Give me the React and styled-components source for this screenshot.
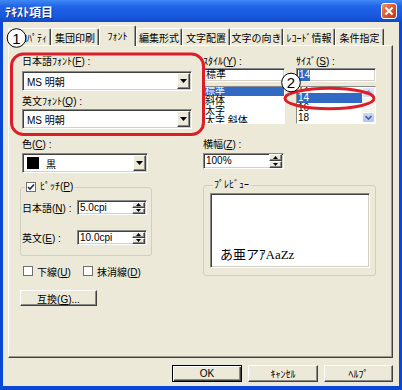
import React from "react";
import styled, { css, createGlobalStyle } from "styled-components";

const GlobalStyle = createGlobalStyle`
  html, body {
    margin: 0;
    padding: 0;
  }
  body {
    font-family: "Liberation Sans", "Noto Sans CJK JP", sans-serif;
    font-size: 10px;
    color: #000;
  }
`;

const sunken = css`
  box-sizing: border-box;
  border: 1px solid;
  border-color: #8a8a8a #fff #fff #8a8a8a;
  box-shadow: inset 1px 1px 0 #404040, inset -1px -1px 0 #d4d0c8;
  background: #fff;
`;

const raised = css`
  box-sizing: border-box;
  border: 1px solid;
  border-color: #fff #404040 #404040 #fff;
  box-shadow: inset -1px -1px 0 #8a8a8a;
  background: #ece9d8;
`;

const Window = styled.div`
  position: relative;
  width: 402px;
  height: 390px;
  display: flex;
  flex-direction: column;
  overflow: hidden;
`;

const TitleBar = styled.div`
  flex: none;
  height: 22px;
  display: flex;
  align-items: center;
  justify-content: space-between;
  padding: 0 5px;
  background: linear-gradient(#3f89f5 0%, #2163e6 30%, #1757de 75%, #0f48cc 100%);
`;

const Title = styled.span`
  color: #fff;
  font-family: "Noto Sans CJK JP", sans-serif;
  font-size: 12px;
  font-weight: bold;
  text-shadow: 1px 1px 0 #0c2e8a;
`;

const CloseButton = styled.div`
  box-sizing: border-box;
  width: 16px;
  height: 16px;
  border: 1px solid #fff;
  border-radius: 3px;
  background: linear-gradient(135deg, #f0906c, #d9532c 55%, #bb3a1a);
  display: flex;
  align-items: center;
  justify-content: center;
`;

const Body = styled.div`
  flex: 1;
  display: flex;
  flex-direction: column;
  background: #ece9d8;
  border: solid #0b47d5;
  border-width: 0 3px 4px 3px;
  padding: 3px 6px 0 5px;
`;

const TabStrip = styled.div`
  position: relative;
  z-index: 1;
  display: flex;
  align-items: flex-end;
  height: 21px;
  margin-bottom: -1px;
`;

const Tab = styled.div`
  box-sizing: border-box;
  width: ${(p) => p.$w}px;
  height: ${(p) => (p.$active ? 21 : 17)}px;
  margin-bottom: ${(p) => (p.$active ? 0 : 1)}px;
  padding-bottom: ${(p) => (p.$active ? 1 : 0)}px;
  display: flex;
  align-items: center;
  justify-content: center;
  background: #ece9d8;
  border-top: 1px solid #fff;
  border-left: 1px solid #fff;
  border-right: 1px solid #404040;
  box-shadow: inset -1px 0 0 #9d9a8c;
  border-radius: 2px 2px 0 0;
  white-space: nowrap;
`;

const Panel = styled.div`
  box-sizing: border-box;
  height: 313px;
  display: flex;
  gap: 11px;
  padding: 10px 0 0 13px;
  border: 1px solid;
  border-color: #fff #404040 #404040 #fff;
  box-shadow: inset -1px -1px 0 #9d9a8c;
`;

const Column = styled.div`
  flex: none;
  width: ${(p) => p.$w}px;
  display: flex;
  flex-direction: column;
  align-items: flex-start;
`;

const FieldLabel = styled.div`
  height: 12px;
  line-height: 12px;
  margin-top: ${(p) => p.$mt || 0}px;
  white-space: nowrap;
`;

const Combo = styled.div`
  ${sunken}
  width: ${(p) => p.$w}px;
  height: 20px;
  margin-top: ${(p) => p.$mt || 0}px;
  display: flex;
  align-items: center;
  gap: 7px;
  padding: 0 1px 0 4px;
  white-space: nowrap;
`;

const DropButton = styled.div`
  ${raised}
  margin-left: auto;
  width: 13px;
  height: 16px;
  display: flex;
  align-items: center;
  justify-content: center;
`;

const Swatch = styled.span`
  width: 12px;
  height: 12px;
  background: #000;
`;

const Group = styled.fieldset`
  box-sizing: border-box;
  width: ${(p) => p.$w}px;
  margin: ${(p) => p.$mt}px 0 0 ${(p) => p.$ml || 0}px;
  padding: ${(p) => p.$pad};
  min-width: 0;
  border: 1px solid #d0d0bf;
  border-radius: 3px;
`;

const Legend = styled.legend`
  height: 12px;
  line-height: 12px;
  padding: 0 2px 0 1px;
  margin-left: 3px;
`;

const LegendInner = styled.span`
  display: inline-flex;
  align-items: center;
  gap: 4px;
  height: 12px;
`;

const PitchRow = styled.div`
  display: flex;
  align-items: center;
  margin-top: ${(p) => p.$mt || 0}px;
`;

const RowLabel = styled.span`
  width: 55px;
  white-space: nowrap;
`;

const Spin = styled.div`
  ${sunken}
  width: ${(p) => p.$w}px;
  height: ${(p) => p.$h}px;
  margin-top: ${(p) => p.$mt || 0}px;
  display: flex;
  align-items: center;
  padding: 0 1px 0 2px;
  line-height: 12px;
`;

const SpinButtons = styled.div`
  margin-left: auto;
  display: flex;
  flex-direction: column;
`;

const SpinButton = styled.div`
  ${raised}
  width: 13px;
  height: ${(p) => p.$h}px;
  display: flex;
  align-items: center;
  justify-content: center;
`;

const CheckRow = styled.div`
  display: flex;
  align-items: center;
  margin-top: 9px;
  padding-left: 1px;
`;

const CheckItem = styled.label`
  display: flex;
  align-items: center;
  gap: 4px;
  width: ${(p) => p.$w}px;
  height: 12px;
  white-space: nowrap;
`;

const CheckBox = styled.span`
  box-sizing: border-box;
  width: 10px;
  height: 10px;
  border: 1px solid #6f6f6f;
  background: #fff;
  display: flex;
  align-items: center;
  justify-content: center;
`;

const PushButton = styled.div`
  ${raised}
  width: ${(p) => p.$w}px;
  height: ${(p) => p.$h}px;
  margin-top: ${(p) => p.$mt || 0}px;
  margin-left: ${(p) => p.$ml || 0}px;
  display: flex;
  align-items: center;
  justify-content: center;
  white-space: nowrap;
  ${(p) =>
    p.$default &&
    css`
      border-color: #000;
      box-shadow: inset 1px 1px 0 #fff, inset -1px -1px 0 #404040,
        inset -2px -2px 0 #8a8a8a;
    `}
`;

const StyleRow = styled.div`
  display: flex;
  gap: 11px;
`;

const TextBox = styled.div`
  ${sunken}
  width: 100%;
  height: 14px;
  display: flex;
  align-items: center;
  padding-left: 2px;
  line-height: 12px;
`;

const Selected = styled.span`
  background: #316ac5;
  color: #fff;
`;

const ListBox = styled.div`
  box-sizing: border-box;
  width: 100%;
  height: 38px;
  margin-top: 4px;
  display: flex;
  overflow: hidden;
  border: 1px solid;
  border-color: #8a8a8a #fff #fff #8a8a8a;
  background: #fff;
`;

const ListItems = styled.div`
  flex: 1;
  margin-top: ${(p) => p.$offset}px;
`;

const ListItem = styled.div`
  height: 10px;
  line-height: 10px;
  padding-left: 1px;
  white-space: nowrap;
  ${(p) =>
    p.$selected &&
    css`
      background: #316ac5;
      color: #fff;
    `}
`;

const ScrollBar = styled.div`
  flex: none;
  width: 13px;
  display: flex;
  flex-direction: column;
  justify-content: space-between;
  background: #f4f3ee;
`;

const ScrollButton = styled.div`
  box-sizing: border-box;
  width: 13px;
  height: 11px;
  border: 1px solid #fff;
  border-radius: 2px;
  background: ${(p) =>
    p.$dim
      ? "linear-gradient(#dfe6f6, #cfd9f0)"
      : "linear-gradient(#c9d8fb, #b2c7f5)"};
  display: flex;
  align-items: center;
  justify-content: center;
`;

const PreviewBox = styled.div`
  ${sunken}
  height: 75px;
  display: flex;
  align-items: flex-end;
  padding: 0 0 6px 9px;
  font-family: "Liberation Serif", "Noto Sans CJK JP", serif;
  font-size: 13px;
  line-height: 13px;
`;

const ButtonRow = styled.div`
  display: flex;
  justify-content: flex-end;
  gap: 6px;
  margin-top: 7px;
`;

const Annotations = styled.svg`
  position: absolute;
  z-index: 5;
  left: 0;
  top: 0;
  pointer-events: none;
`;

const DownTriangle = () => (
  <svg width="7" height="4" viewBox="0 0 7 4">
    <polygon points="0,0 7,0 3.5,4" fill="#000" />
  </svg>
);

const SpinArrow = ({ up }) => (
  <svg width="5" height="3" viewBox="0 0 5 3">
    <polygon points={up ? "0,3 5,3 2.5,0" : "0,0 5,0 2.5,3"} fill="#000" />
  </svg>
);

const Chevron = ({ up, color }) => (
  <svg width="7" height="5" viewBox="0 0 7 5">
    <polyline
      points={up ? "0.5,4 3.5,1 6.5,4" : "0.5,1 3.5,4 6.5,1"}
      fill="none"
      stroke={color}
      strokeWidth="1.6"
    />
  </svg>
);

const Check = () => (
  <svg width="8" height="8" viewBox="0 0 8 8">
    <polyline points="1,4 3,6 7,1.5" fill="none" stroke="#1b2a56" strokeWidth="1.6" />
  </svg>
);

const SpinBox = ({ value, w, h, mt }) => {
  const half = Math.floor((h - 2) / 2);
  return (
    <Spin $w={w} $h={h} $mt={mt}>
      {value}
      <SpinButtons>
        <SpinButton $h={half}>
          <SpinArrow up />
        </SpinButton>
        <SpinButton $h={half}>
          <SpinArrow />
        </SpinButton>
      </SpinButtons>
    </Spin>
  );
};

const tabs = [
  { label: "ﾌﾟﾛﾊﾟﾃｨ", w: 43 },
  { label: "集団印刷", w: 48 },
  { label: "ﾌｫﾝﾄ", w: 37, active: true },
  { label: "編集形式", w: 46 },
  { label: "文字配置", w: 48 },
  { label: "文字の向き", w: 53 },
  { label: "ﾚｺｰﾄﾞ情報", w: 52 },
  { label: "条件指定", w: 49 },
];

const styles = ["標準", "斜体", "太字", "太字 斜体"];
const sizes = ["12", "14", "16", "18"];

const App = () => {
  return (
    <Window>
      <GlobalStyle />
      <TitleBar>
        <Title>ﾃｷｽﾄ項目</Title>
        <CloseButton>
          <svg width="10" height="10" viewBox="0 0 10 10">
            <path d="M1.5 1.5 L8.5 8.5 M8.5 1.5 L1.5 8.5" stroke="#fff" strokeWidth="2" />
          </svg>
        </CloseButton>
      </TitleBar>
      <Body>
        <TabStrip>
          {tabs.map((t) => (
            <Tab key={t.label} $w={t.w} $active={t.active}>
              {t.label}
            </Tab>
          ))}
        </TabStrip>
        <Panel>
          <Column $w={170}>
            <FieldLabel>
              日本語ﾌｫﾝﾄ(<u>F</u>) :
            </FieldLabel>
            <Combo $w={170} $mt={3}>
              <span>MS 明朝</span>
              <DropButton>
                <DownTriangle />
              </DropButton>
            </Combo>
            <FieldLabel $mt={5}>
              英文ﾌｫﾝﾄ(<u>Q</u>) :
            </FieldLabel>
            <Combo $w={170} $mt={1}>
              <span>MS 明朝</span>
              <DropButton>
                <DownTriangle />
              </DropButton>
            </Combo>
            <FieldLabel $mt={10}>
              色(<u>C</u>) :
            </FieldLabel>
            <Combo $w={126} $mt={2}>
              <Swatch />
              <span>黒</span>
              <DropButton>
                <DownTriangle />
              </DropButton>
            </Combo>
            <Group $w={132} $mt={8} $ml={-2} $pad="7px 0 10px 1px">
              <Legend>
                <LegendInner>
                  <CheckBox>
                    <Check />
                  </CheckBox>
                  <span>
                    ﾋﾟｯﾁ(<u>P</u>)
                  </span>
                </LegendInner>
              </Legend>
              <PitchRow>
                <RowLabel>
                  日本語(<u>N</u>) :
                </RowLabel>
                <SpinBox value="5.0cpi" w={70} h={15} />
              </PitchRow>
              <PitchRow $mt={15}>
                <RowLabel>
                  英文(<u>E</u>) :
                </RowLabel>
                <SpinBox value="10.0cpi" w={70} h={15} />
              </PitchRow>
            </Group>
            <CheckRow>
              <CheckItem $w={60}>
                <CheckBox />
                <span>
                  下線(<u>U</u>)
                </span>
              </CheckItem>
              <CheckItem $w={70}>
                <CheckBox />
                <span>
                  抹消線(<u>D</u>)
                </span>
              </CheckItem>
            </CheckRow>
            <PushButton $w={77} $h={16} $mt={13} $ml={-2}>
              <span>
                互換(<u>G</u>)...
              </span>
            </PushButton>
          </Column>
          <Column $w={173}>
            <StyleRow>
              <Column $w={82}>
                <FieldLabel>
                  ｽﾀｲﾙ(<u>Y</u>) :
                </FieldLabel>
                <TextBox>標準</TextBox>
                <ListBox>
                  <ListItems $offset={-1}>
                    {styles.map((s, i) => (
                      <ListItem key={s} $selected={i === 0}>
                        {s}
                      </ListItem>
                    ))}
                  </ListItems>
                </ListBox>
              </Column>
              <Column $w={80}>
                <FieldLabel>
                  ｻｲｽﾞ(<u>S</u>) :
                </FieldLabel>
                <TextBox>
                  <Selected>14</Selected>
                </TextBox>
                <ListBox>
                  <ListItems $offset={-4}>
                    {sizes.map((s) => (
                      <ListItem key={s} $selected={s === "14"}>
                        {s}
                      </ListItem>
                    ))}
                  </ListItems>
                  <ScrollBar>
                    <ScrollButton $dim>
                      <Chevron up color="#8a9ac0" />
                    </ScrollButton>
                    <ScrollButton>
                      <Chevron color="#4d6185" />
                    </ScrollButton>
                  </ScrollBar>
                </ListBox>
              </Column>
            </StyleRow>
            <FieldLabel $mt={15}>
              横幅(<u>Z</u>) :
            </FieldLabel>
            <SpinBox value="100%" w={81} h={16} mt={2} />
            <Group $w={173} $mt={10} $pad="2px 5px 7px 6px">
              <Legend>ﾌﾟﾚﾋﾞｭｰ</Legend>
              <PreviewBox>あ亜アｱAaZz</PreviewBox>
            </Group>
          </Column>
        </Panel>
        <ButtonRow>
          <PushButton $w={70} $h={17} $default>
            OK
          </PushButton>
          <PushButton $w={70} $h={17}>
            ｷｬﾝｾﾙ
          </PushButton>
          <PushButton $w={69} $h={17}>
            ﾍﾙﾌﾟ
          </PushButton>
        </ButtonRow>
      </Body>
      <Annotations width="402" height="390" viewBox="0 0 402 390">
        <rect x="11.5" y="54" width="192" height="80.5" rx="12" fill="none" stroke="#dc1e28" strokeWidth="3" />
        <ellipse cx="329.5" cy="98.5" rx="44.5" ry="10.2" fill="none" stroke="#dc1e28" strokeWidth="3" />
        <circle cx="16.5" cy="38" r="9.3" fill="#fff" stroke="#000" strokeWidth="1" />
        <text x="16.5" y="43.5" textAnchor="middle" fontSize="15" fontFamily="Liberation Sans, sans-serif">
          1
        </text>
        <circle cx="291" cy="82.5" r="9.3" fill="#fff" stroke="#000" strokeWidth="1" />
        <text x="291" y="88" textAnchor="middle" fontSize="15" fontFamily="Liberation Sans, sans-serif">
          2
        </text>
      </Annotations>
    </Window>
  );
};

export default App;
